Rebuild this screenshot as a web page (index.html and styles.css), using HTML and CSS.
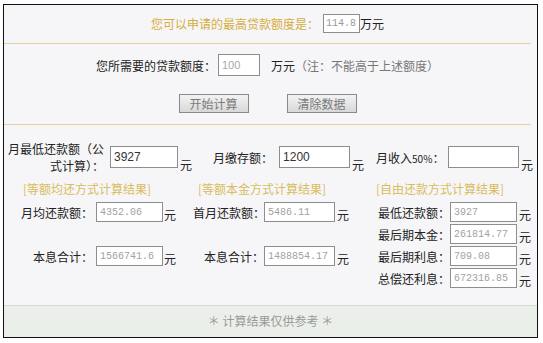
FILE: index.html
```html
<!DOCTYPE html>
<html lang="zh-CN">
<head>
    <meta charset="utf-8" />
    <title>贷款额度计算</title>
    <link rel="stylesheet" href="styles.css">
</head>
<body>
    <div class="calc">
        <div class="row top">
            <span class="gold">您可以申请的最高贷款额度是：</span>
            <input class="box max" value="114.8" readonly><span>万元</span>
        </div>

        <div class="row need">
            <span>您所需要的贷款额度：</span>
            <input class="amount" value="100">
            <span class="wan">万元</span><span class="note">（注：不能高于上述额度）</span>
        </div>

        <div class="row actions">
            <button class="btn">开始计算</button>
            <button class="btn">清除数据</button>
        </div>

        <div class="inputs">
            <span class="lbl-min">月最低还款额（公式计算）：</span>
            <input class="field f-min" value="3927"><span class="yuan">元</span>
            <span class="lbl-save">月缴存额：</span>
            <input class="field f-save" value="1200"><span class="yuan">元</span>
            <span class="lbl-income">月收入<small>50%</small>：</span>
            <input class="field f-income" value=""><span class="yuan">元</span>
        </div>

        <div class="results">
            <div class="hd hd1">[等额均还方式计算结果]</div>
            <div class="hd hd2">[等额本金方式计算结果]</div>
            <div class="hd hd3">[自由还款方式计算结果]</div>

            <span class="lbl c1">月均还款额：</span>
            <input class="box" value="4352.06" readonly><span class="unit c3">元</span>
            <span class="lbl">首月还款额：</span>
            <input class="box" value="5486.11" readonly><span class="unit c6">元</span>
            <span class="lbl">最低还款额：</span>
            <input class="box" value="3927" readonly><span class="unit c9">元</span>

            <span class="lbl skip">最后期本金：</span>
            <input class="box" value="261814.77" readonly><span class="unit c9">元</span>

            <span class="lbl c1">本息合计：</span>
            <input class="box" value="1566741.6" readonly><span class="unit c3">元</span>
            <span class="lbl">本息合计：</span>
            <input class="box" value="1488854.17" readonly><span class="unit c6">元</span>
            <span class="lbl">最后期利息：</span>
            <input class="box" value="709.08" readonly><span class="unit c9">元</span>

            <span class="lbl skip">总偿还利息：</span>
            <input class="box" value="672316.85" readonly><span class="unit c9">元</span>
        </div>

        <div class="footer">＊ 计算结果仅供参考 ＊</div>
    </div>
</body>
</html>
```

FILE: styles.css
```css
* {
    box-sizing: border-box;
}

body {
    margin: 0;
    background: #fff;
    font-family: "Noto Sans CJK SC", sans-serif;
    font-size: 12px;
    color: #222;
}

.calc {
    width: 535px;
    height: 334px;
    margin: 4px 0 0 3px;
    border: 1px solid #111;
    background: #f6f6f8;
    display: flex;
    flex-direction: column;
}

.row {
    display: flex;
    align-items: center;
    justify-content: center;
    margin-right: 6px;
}

.top {
    height: 39px;
    border-bottom: 1px solid #e2d19f;
    padding-bottom: 2px;
}

.gold {
    color: #d6ad3c;
    margin-right: 4px;
}

.box {
    font: 10px "Liberation Mono", monospace;
    color: #a2a2a2;
    background: #fff;
    border: 1px solid #8e8e8e;
    padding: 0 3px;
    height: 20px;
    width: 100%;
    outline: none;
}

.max {
    width: 37px;
    height: 19px;
    padding: 0 2px;
    color: #999;
}

.need {
    height: 42px;
}

.amount {
    width: 42px;
    height: 22px;
    margin-left: 2px;
    border: 1px solid #8e8e8e;
    background: #fff;
    padding: 0 3px;
    font: 11px "Liberation Sans", sans-serif;
    color: #aaa;
}

.wan {
    margin-left: 11px;
}

.note {
    color: #777;
}

.actions {
    height: 39px;
    align-items: flex-start;
    padding-top: 8px;
    gap: 38px;
    border-bottom: 1px solid #e2d19f;
}

.btn {
    width: 70px;
    height: 19px;
    padding: 0;
    border: 1px solid #8a8a8a;
    background: linear-gradient(#f3f3f3, #d8d8d8);
    color: #7a7a7a;
    font: 12px "Noto Sans CJK SC", sans-serif;
    line-height: 17px;
}

.inputs {
    display: flex;
    align-items: center;
    height: 50px;
    padding-top: 14px;
}

.lbl-min {
    width: 100px;
    text-align: right;
    line-height: 17px;
}

.field {
    height: 22px;
    border: 1px solid #8e8e8e;
    background: #fff;
    padding: 0 3px;
    font: 12px "Liberation Sans", sans-serif;
    color: #333;
}

.f-min {
    width: 68px;
    margin-left: 6px;
}

.yuan {
    margin-left: 2px;
    align-self: flex-end;
    line-height: 20px;
}

.lbl-save {
    margin-left: 21px;
}

.f-save {
    width: 71px;
    margin-left: 6px;
}

.lbl-income {
    margin-left: 12px;
    width: 72px;
}

.lbl-income small {
    font-size: 10px;
}

.f-income {
    width: 71px;
}

.results {
    display: grid;
    grid-template-columns: 92px 67px 30px 71px 71px 43px 72px 67px 20px;
    grid-template-rows: 26px repeat(4, 22px);
    align-items: center;
}

.hd {
    color: #d9bc5c;
}

.hd1 {
    grid-column: 1 / 4;
    padding-left: 19px;
}

.hd2 {
    grid-column: 4 / 7;
    padding-left: 5px;
}

.hd3 {
    grid-column: 7 / 10;
    margin-left: -2px;
}

.lbl {
    text-align: right;
    white-space: nowrap;
}

.lbl.c1 {
    padding-right: 3px;
}

.skip {
    grid-column: 7;
}

.unit {
    padding-top: 4px;
}

.unit.c3 {
    padding-left: 1px;
}

.unit.c6,
.unit.c9 {
    padding-left: 2px;
}

.footer {
    margin-top: auto;
    height: 32px;
    border-top: 1px solid #d8d8d8;
    background: #ebefe9;
    color: #999;
    text-align: center;
    line-height: 30px;
}
```
